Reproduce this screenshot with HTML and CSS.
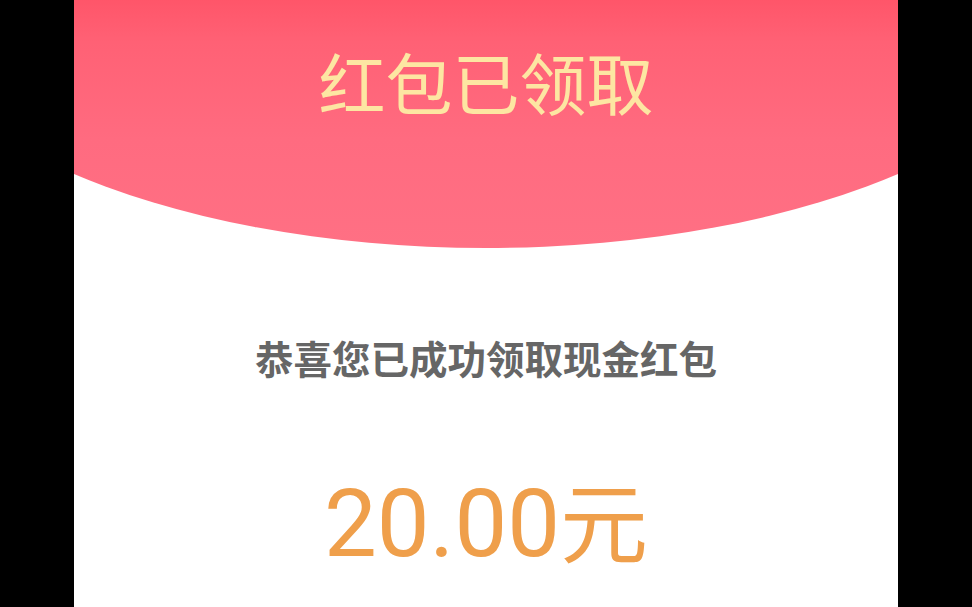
FILE: index.html
```html
<!DOCTYPE html>
<html lang="zh-CN">
<head>
<meta charset="utf-8">
<title>红包已领取</title>
<link rel="stylesheet" href="styles.css">
</head>
<body>
<div class="stage">
  <main class="panel">
    <header class="hero">
      <div class="hero-bg"></div>
      <h1 class="hero-title">红包已领取</h1>
    </header>
    <p class="message">恭喜您已成功领取现金红包</p>
    <p class="amount"><span class="num">20.00</span><span class="unit">元</span></p>
  </main>
</div>
</body>
</html>
```

FILE: styles.css
```css
html, body {
  margin: 0;
  padding: 0;
  background: #000;
  width: 972px;
  height: 607px;
  overflow: hidden;
  font-family: "Noto Sans CJK SC", "Noto Sans", sans-serif;
}
.stage {
  display: flex;
  justify-content: center;
  height: 607px;
}
.panel {
  width: 824px;
  height: 607px;
  background: #fff;
  display: flex;
  flex-direction: column;
  align-items: center;
  overflow: hidden;
}
.hero {
  position: relative;
  width: 100%;
  height: 250px;
  display: flex;
  justify-content: center;
}
.hero-bg {
  position: absolute;
  left: -188px;
  width: 1200px;
  top: -294px;
  height: 542px;
  border-radius: 50%;
  background: linear-gradient(180deg, #ff5569 54%, #ff6175 62%, #ff6b80 80%, #ff7084 100%);
}
.hero-title {
  position: relative;
  margin: 36px 0 0;
  font-size: 67px;
  font-weight: 400;
  line-height: 90px;
  color: #fde6a2;
  letter-spacing: 0;
}
.message {
  margin: 82px 0 0;
  font-size: 38.5px;
  line-height: 50px;
  font-weight: 700;
  color: #666;
}
.amount {
  margin: 86px 0 0;
  color: #ef9f4b;
  line-height: 100px;
  display: flex;
  align-items: baseline;
}
.num {
  font-family: "Roboto", "Noto Sans", sans-serif;
  font-size: 94px;
}
.unit {
  font-family: "Noto Sans CJK SC", sans-serif;
  font-size: 88px;
  font-weight: 400;
}
```
